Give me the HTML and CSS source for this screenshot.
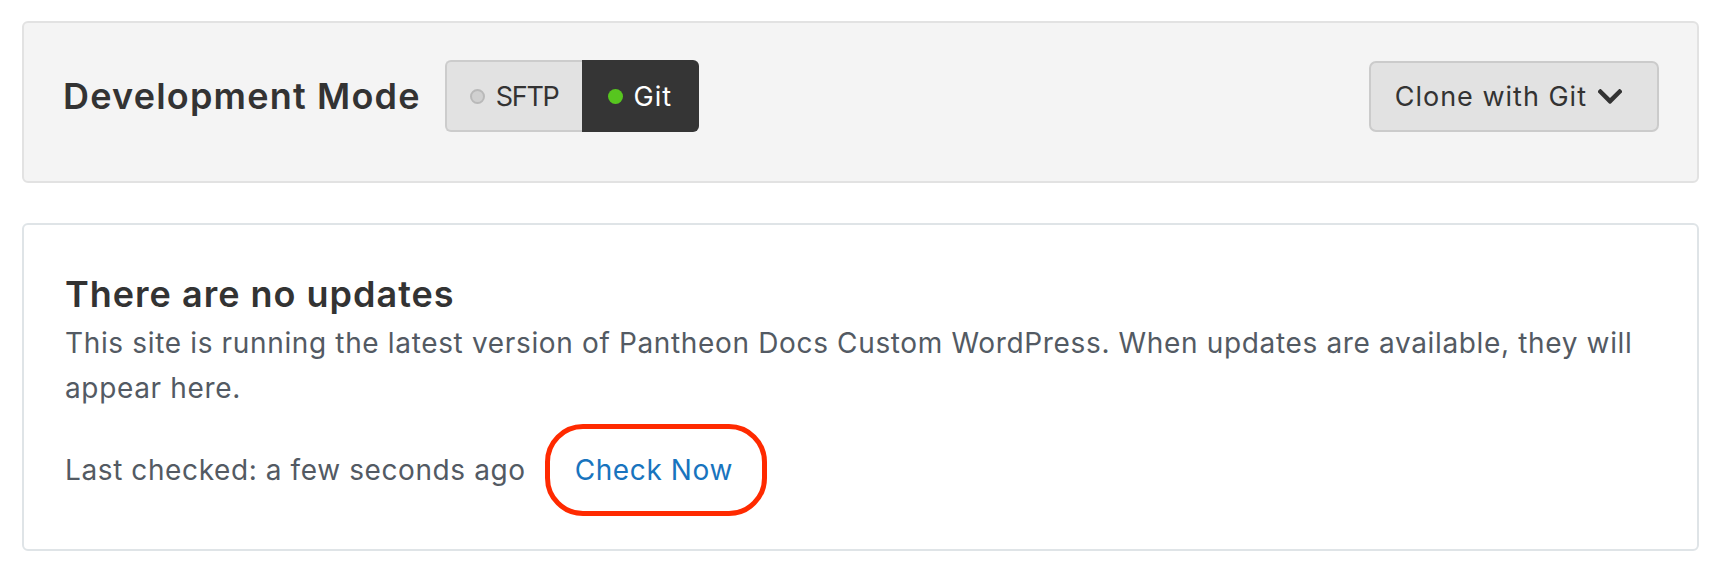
FILE: index.html
```html
<!DOCTYPE html>
<html lang="en">
<head>
<meta charset="utf-8">
<title>Development Mode</title>
<link rel="stylesheet" href="styles.css">
</head>
<body>
  <section class="mode-panel">
    <h2 class="mode-title">Development Mode</h2>
    <div class="toggle">
      <div class="seg seg-off"><span class="dot dot-off"></span><span class="seg-label">SFTP</span></div>
      <div class="seg seg-on"><span class="dot dot-on"></span><span class="seg-label">Git</span></div>
    </div>
    <button class="clone-btn" type="button">
      <span>Clone with Git</span>
      <svg class="chev" viewBox="10 126 428 262" width="24" height="15" aria-hidden="true"><path d="M207.029 381.476L12.686 187.132c-9.373-9.373-9.373-24.569 0-33.941l22.667-22.667c9.357-9.357 24.522-9.375 33.901-.04L224 284.505l154.745-154.021c9.379-9.335 24.544-9.317 33.901.04l22.667 22.667c9.373 9.373 9.373 24.569 0 33.941L240.971 381.476c-9.373 9.372-24.569 9.372-33.942 0z"/></svg>
    </button>
  </section>

  <section class="updates-panel">
    <h3 class="updates-title">There are no updates</h3>
    <p class="updates-text">This site is running the latest version of Pantheon Docs Custom WordPress. When updates are available, they will appear here.</p>
    <div class="check-row">
      <span class="last-checked">Last checked: a few seconds ago</span>
      <a class="check-now" href="#">Check Now</a>
    </div>
  </section>
</body>
</html>
```

FILE: styles.css
```css
* { box-sizing: border-box; }

html, body { background: #ffffff; }

body {
  margin: 0;
  padding: 21px 25px 0 22px;
  font-family: Inter, "Noto Sans", sans-serif;
  color: #333333;
}

.mode-panel {
  height: 162px;
  display: flex;
  align-items: center;
  padding: 37px 38px 49px 39px;
  background: #f4f4f4;
  border: 2px solid #e2e2e2;
  border-radius: 6px;
}

.mode-title {
  margin: 0 24px 0 0;
  font-size: 36px;
  font-weight: 600;
  letter-spacing: 1.2px;
  line-height: 44px;
  color: #333333;
}

.toggle {
  display: flex;
  height: 72px;
}

.seg {
  display: flex;
  align-items: center;
  gap: 11px;
  font-size: 27px;
  line-height: 1;
}

.seg-off {
  padding: 0 23px 0 23px;
  background: #e2e2e2;
  border: 2px solid #cccccc;
  border-right: none;
  border-radius: 6px 0 0 6px;
  color: #333333;
}

.seg-off .seg-label {
  letter-spacing: -1.3px;
}

.seg-on {
  padding: 0 27px 0 26px;
  background: #353535;
  border-radius: 0 6px 6px 0;
  color: #ffffff;
}

.seg-on .seg-label {
  letter-spacing: 1px;
}

.dot {
  width: 15px;
  height: 15px;
  border-radius: 50%;
  flex: none;
}

.dot-off {
  background: #d0d0d0;
  border: 2px solid #b9b9b9;
}

.dot-on {
  background: #57c61f;
}

.clone-btn {
  margin-left: auto;
  height: 71px;
  display: flex;
  align-items: center;
  gap: 11px;
  padding: 0 35px 0 24px;
  background: #e2e2e2;
  border: 2px solid #cbcbcb;
  border-radius: 7px;
  font-family: inherit;
  font-size: 27px;
  letter-spacing: 1px;
  color: #333333;
}

.chev {
  fill: #333333;
  flex: none;
}

.updates-panel {
  margin-top: 40px;
  padding: 47px 40px 33px 41px;
  background: #ffffff;
  border: 2px solid #dfe4e7;
  border-radius: 6px;
}

.updates-title {
  margin: 0;
  font-size: 36px;
  font-weight: 600;
  letter-spacing: 1px;
  line-height: 44px;
  color: #333333;
}

.updates-text {
  margin: 5px 0 0 0;
  font-size: 28px;
  letter-spacing: 0.65px;
  line-height: 45px;
  color: #535a63;
}

.check-row {
  margin-top: 13px;
  display: flex;
  align-items: center;
  gap: 19px;
  font-size: 28px;
  letter-spacing: 0.6px;
  color: #535a63;
}

.check-now {
  display: flex;
  align-items: center;
  height: 92px;
  padding: 0 29px 0 25px;
  border: 5px solid #ff2a00;
  border-radius: 38px;
  color: #1874be;
  text-decoration: none;
}
```
